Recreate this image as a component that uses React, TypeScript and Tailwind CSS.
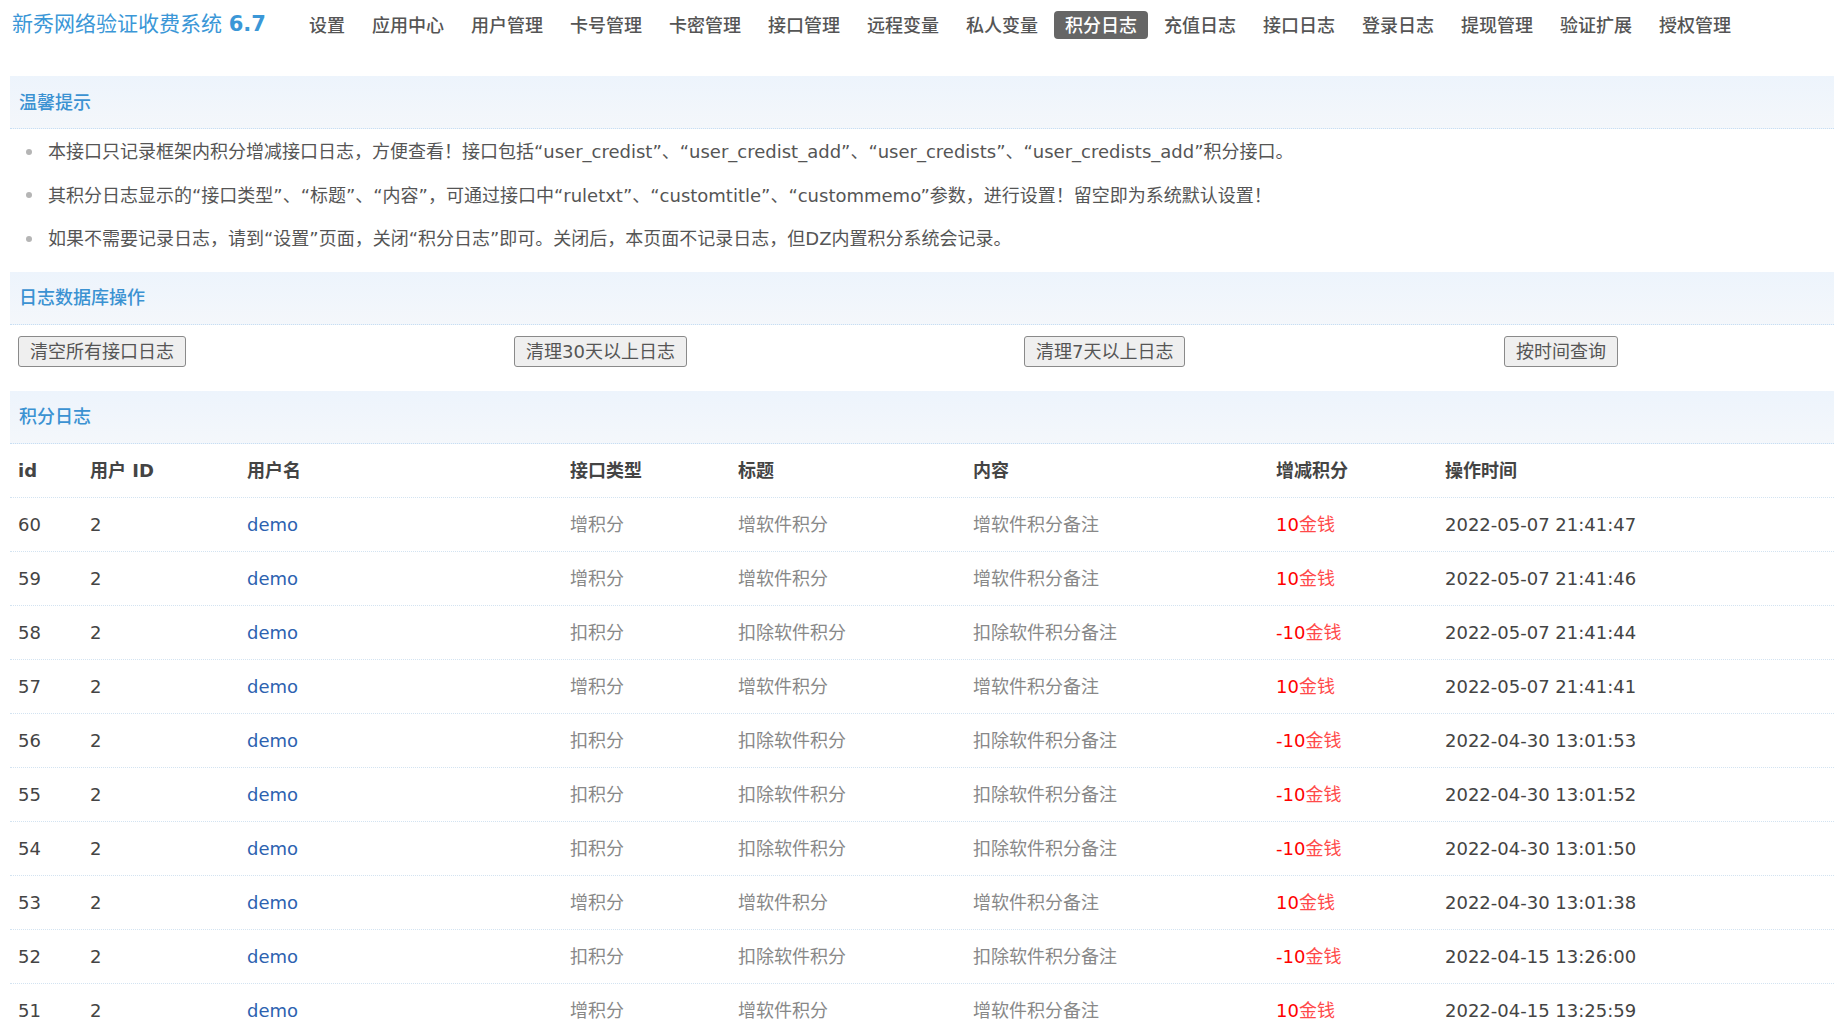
import React from "react";

const navItems = [
  "设置",
  "应用中心",
  "用户管理",
  "卡号管理",
  "卡密管理",
  "接口管理",
  "远程变量",
  "私人变量",
  "积分日志",
  "充值日志",
  "接口日志",
  "登录日志",
  "提现管理",
  "验证扩展",
  "授权管理",
];

type Row = { id: number; add: boolean; time: string };

const rows: Row[] = [
  { id: 60, add: true, time: "2022-05-07 21:41:47" },
  { id: 59, add: true, time: "2022-05-07 21:41:46" },
  { id: 58, add: false, time: "2022-05-07 21:41:44" },
  { id: 57, add: true, time: "2022-05-07 21:41:41" },
  { id: 56, add: false, time: "2022-04-30 13:01:53" },
  { id: 55, add: false, time: "2022-04-30 13:01:52" },
  { id: 54, add: false, time: "2022-04-30 13:01:50" },
  { id: 53, add: true, time: "2022-04-30 13:01:38" },
  { id: 52, add: false, time: "2022-04-15 13:26:00" },
  { id: 51, add: true, time: "2022-04-15 13:25:59" },
];

const cols = "grid grid-cols-[72px_157px_323px_168px_235px_303px_169px_1fr]";

function Band({ title }: { title: string }) {
  return (
    <div className="h-[53px] flex items-center pl-[9px] bg-gradient-to-b from-[#edf4fc] to-[#f4f7fb] border-b border-dotted border-[#c8def2]">
      <span className="text-[18px] font-medium text-[#3b92d2]">{title}</span>
    </div>
  );
}

function Btn({ children }: { children: React.ReactNode }) {
  return (
    <button className="h-[31px] px-[11px] border border-[#8a8a8a] rounded-[3px] bg-[#efefef] text-[18px] text-[#555] leading-none">
      {children}
    </button>
  );
}

function Tip({ children }: { children: React.ReactNode }) {
  return (
    <li className="flex items-center h-[43.5px] pl-[16px]">
      <span className="w-[6px] h-[6px] rounded-full bg-[#b5b5b5] mr-[16px]" />
      <span className="text-[18px] text-[#555]">{children}</span>
    </li>
  );
}

export default function App() {
  return (
    <div className="w-[1834px] h-[1024px] overflow-hidden bg-white font-['DejaVu_Sans','Noto_Sans_CJK_SC',sans-serif] text-[#555]">
      <header className="h-[50px] flex items-center pl-[12px]">
        <div className="text-[21px] text-[#3b97d7] whitespace-nowrap">
          新秀网络验证收费系统 <span className="font-bold">6.7</span>
        </div>
        <nav className="ml-[32px] flex items-center gap-[5px]">
          {navItems.map((n) => (
            <span
              key={n}
              className={
                n === "积分日志"
                  ? "h-[28px] px-[11px] flex items-center rounded-[4px] bg-[#666] text-white text-[18px] font-medium"
                  : "h-[28px] px-[11px] flex items-center text-[#555] text-[18px] font-medium"
              }
            >
              {n}
            </span>
          ))}
        </nav>
      </header>

      <main className="pl-[10px] pt-[26px]">
        <Band title="温馨提示" />
        <ul className="pt-[1px]">
          <Tip>
            本接口只记录框架内积分增减接口日志，方便查看！接口包括“user_credist”、“user_credist_add”、“user_credists”、“user_credists_add”积分接口。
          </Tip>
          <Tip>
            其积分日志显示的“接口类型”、“标题”、“内容”，可通过接口中“ruletxt”、“customtitle”、“custommemo”参数，进行设置！留空即为系统默认设置！
          </Tip>
          <Tip>
            如果不需要记录日志，请到“设置”页面，关闭“积分日志”即可。关闭后，本页面不记录日志，但DZ内置积分系统会记录。
          </Tip>
        </ul>

        <div className="mt-[11px]">
          <Band title="日志数据库操作" />
          <div className="grid grid-cols-[496px_510px_480px_1fr] h-[54px] items-center">
            <div className="pl-[8px]">
              <Btn>清空所有接口日志</Btn>
            </div>
            <div className="pl-[8px]">
              <Btn>清理30天以上日志</Btn>
            </div>
            <div className="pl-[8px]">
              <Btn>清理7天以上日志</Btn>
            </div>
            <div className="pl-[8px]">
              <Btn>按时间查询</Btn>
            </div>
          </div>
        </div>

        <div className="mt-[12px]">
          <Band title="积分日志" />
          <div className={`${cols} h-[54px] items-center border-b border-dotted border-[#d3e3f1] text-[18px] font-bold text-[#444]`}>
            <div className="pl-[8px]">id</div>
            <div className="pl-[8px]">用户 ID</div>
            <div className="pl-[8px]">用户名</div>
            <div className="pl-[8px]">接口类型</div>
            <div className="pl-[8px]">标题</div>
            <div className="pl-[8px]">内容</div>
            <div className="pl-[8px]">增减积分</div>
            <div className="pl-[8px]">操作时间</div>
          </div>
          {rows.map((r) => (
            <div
              key={r.id}
              className={`${cols} h-[54px] items-center border-b border-dotted border-[#d3e3f1] text-[18px]`}
            >
              <div className="pl-[8px] text-[#444]">{r.id}</div>
              <div className="pl-[8px] text-[#444]">2</div>
              <div className="pl-[8px] text-[#2d62b0]">demo</div>
              <div className="pl-[8px] text-[#888]">{r.add ? "增积分" : "扣积分"}</div>
              <div className="pl-[8px] text-[#888]">{r.add ? "增软件积分" : "扣除软件积分"}</div>
              <div className="pl-[8px] text-[#888]">{r.add ? "增软件积分备注" : "扣除软件积分备注"}</div>
              <div className="pl-[8px]">
                <span className="text-[#ff0000]">{r.add ? "10" : "-10"}</span>
                <span className="text-[#ff4a4a]">金钱</span>
              </div>
              <div className="pl-[8px] text-[#444]">{r.time}</div>
            </div>
          ))}
        </div>
      </main>
    </div>
  );
}
